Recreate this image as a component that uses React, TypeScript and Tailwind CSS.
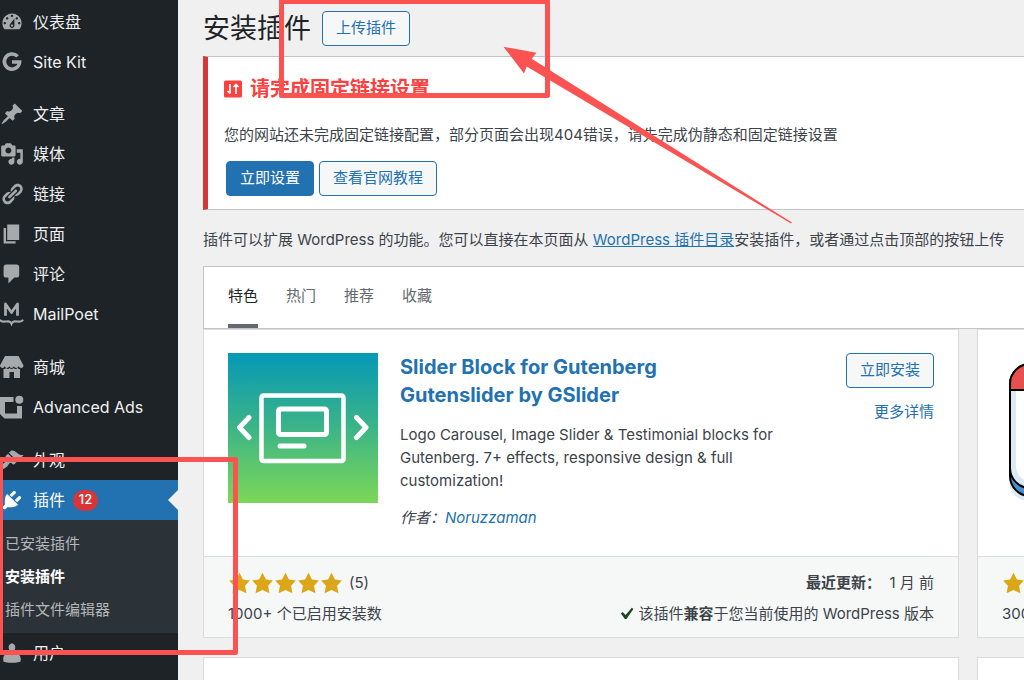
import type { ReactNode } from 'react';

const PATHS = {
  dashboard:
    'M3.76 16h12.48c1.1-1.37 1.76-3.11 1.76-5 0-4.42-3.58-8-8-8s-8 3.58-8 8c0 1.89.66 3.63 1.76 5zM10 4c.55 0 1 .45 1 1s-.45 1-1 1-1-.45-1-1 .45-1 1-1zM6 6c.55 0 1 .45 1 1s-.45 1-1 1-1-.45-1-1 .45-1 1-1zm8 0c.55 0 1 .45 1 1s-.45 1-1 1-1-.45-1-1 .45-1 1-1zm-5.37 5.55L12 7v6c0 1.1-.9 2-2 2s-2-.9-2-2c0-.57.24-1.08.63-1.45zM4 10c.55 0 1 .45 1 1s-.45 1-1 1-1-.45-1-1 .45-1 1-1zm12 0c.55 0 1 .45 1 1s-.45 1-1 1-1-.45-1-1 .45-1 1-1zm-5 3c0-.55-.45-1-1-1s-1 .45-1 1 .45 1 1 1 1-.45 1-1z',
  post: 'M10.44 3.02l1.82-1.82 6.36 6.35-1.83 1.82c-1.05-.68-2.48-.57-3.41.36l-.75.75c-.92.93-1.04 2.35-.35 3.41l-1.83 1.82-2.41-2.41-2.8 2.79c-.42.42-3.38 2.71-3.8 2.29s1.86-3.39 2.28-3.81l2.79-2.79L4.1 9.36l1.83-1.82c1.05.69 2.48.57 3.4-.36l.75-.75c.93-.92 1.05-2.35.36-3.41z',
  media:
    'M13 11V4c0-.55-.45-1-1-1h-1.67L9 1H5L3.67 3H2c-.55 0-1 .45-1 1v7c0 .55.45 1 1 1h10c.55 0 1-.45 1-1zM7 4.5c1.38 0 2.5 1.12 2.5 2.5S8.38 9.5 7 9.5 4.5 8.38 4.5 7 5.62 4.5 7 4.5zM14 6h5v10.5c0 1.38-1.12 2.5-2.5 2.5S14 17.88 14 16.5s1.12-2.5 2.5-2.5c.17 0 .34.02.5.05V9h-3V6zm-4 8.05V13h2v3.5c0 1.38-1.12 2.5-2.5 2.5S7 17.88 7 16.5 8.12 14 9.5 14c.17 0 .34.02.5.05z',
  links:
    'M17.74 2.76c1.68 1.69 1.68 4.41 0 6.1l-1.53 1.52c-1.12 1.12-2.7 1.47-4.14 1.09l2.62-2.61.76-.77.76-.76c.84-.84.84-2.2 0-3.04-.84-.85-2.2-.85-3.04 0l-.77.76-3.38 3.38c-.37-1.44-.02-3.02 1.1-4.14l1.52-1.53c1.69-1.68 4.42-1.68 6.1 0zM8.59 13.43l5.34-5.34c.42-.42.42-1.1 0-1.52-.44-.43-1.13-.39-1.53 0l-5.33 5.34c-.42.42-.42 1.1 0 1.52.44.43 1.13.39 1.52 0zm-.76 2.29l4.14-4.15c.38 1.44.03 3.02-1.09 4.14l-1.52 1.53c-1.69 1.68-4.41 1.68-6.1 0-1.68-1.68-1.68-4.42 0-6.1l1.53-1.52c1.12-1.12 2.7-1.47 4.14-1.1l-4.14 4.15c-.85.84-.85 2.2 0 3.05.84.84 2.2.84 3.04 0z',
  page: 'M6 15V2h10v13H6zm-1 1h8v2H3V5h2v11z',
  comments: 'M5 2h9c1.1 0 2 .9 2 2v7c0 1.1-.9 2-2 2h-2l-5 5v-5H5c-1.1 0-2-.9-2-2V4c0-1.1.9-2 2-2z',
  plugins:
    'M13.11 4.36L9.87 7.6 8 5.73l3.24-3.24c.35-.34 1.05-.2 1.56.32.52.51.66 1.21.31 1.55zm-8 1.77l.91-1.12 9.01 9.01-1.19.84c-.71.71-2.63 1.16-3.82 1.16H6.14L4.9 17.26c-.59.59-1.54.59-2.12 0-.59-.58-.59-1.53 0-2.12l1.24-1.24v-3.88c0-1.13.4-3.19 1.09-3.89zm7.26 3.97l3.24-3.24c.34-.35 1.04-.21 1.55.31.52.51.66 1.21.31 1.55l-3.24 3.25z',
  appearance:
    'M14.48 11.06L7.41 3.99l1.5-1.5c.5-.56 2.3-.47 3.51.32 1.21.8 1.43 1.28 2.91 2.1 1.18.64 2.45 1.26 4.45.85zm-.71.71L6.7 4.7 4.93 6.47c-.39.39-.39 1.02 0 1.41l1.06 1.06c.39.39.39 1.03 0 1.42-.6.6-1.43 1.11-2.21 1.69-.35.26-.7.53-1.01.84C1.43 14.23.4 16.08 1.4 17.07c.99 1 2.84-.03 4.18-1.36.31-.31.58-.66.85-1.02.57-.78 1.08-1.61 1.69-2.21.39-.39 1.02-.39 1.41 0l1.06 1.06c.39.39 1.02.39 1.41 0z',
  users:
    'M10 9.25c-2.27 0-2.73-3.44-2.73-3.44C7 4.02 7.82 2 9.97 2c2.16 0 2.98 2.02 2.71 3.81 0 0-.41 3.44-2.68 3.44zm0 2.57L12.72 10c2.39 0 4.52 2.33 4.52 4.53v2.49s-3.65 1.13-7.24 1.13c-3.65 0-7.24-1.13-7.24-1.13v-2.49c0-2.25 1.94-4.48 4.47-4.48z',
  star: 'M10 1l3 6 6 .75-4.12 4.62L16 19l-6-3-6 3 1.13-6.63L1 7.75 7 7z',
  yes: 'M14.83 4.89l1.34.94-5.81 8.38H9.02L5.78 9.67l1.34-1.25 2.57 2.4z',
};

function Glyph({ name, className = 'size-6' }: { name: keyof typeof PATHS; className?: string }) {
  return (
    <svg viewBox="0 0 20 20" className={`shrink-0 ${className}`} fill="currentColor" fillRule="evenodd" aria-hidden="true">
      <path d={PATHS[name]} />
    </svg>
  );
}

function SiteKitIcon() {
  return (
    <svg viewBox="0 0 24 24" className="size-6 shrink-0" fill="none" stroke="currentColor" strokeWidth="3.6" aria-hidden="true">
      <path d="M17.6 6.4A7.6 7.6 0 1 0 19.6 12H12" />
    </svg>
  );
}

function MailPoetIcon() {
  return (
    <svg viewBox="0 0 24 24" className="size-6 shrink-0" fill="none" stroke="currentColor" aria-hidden="true">
      <path d="M5.500 13.700V2L11.500 10.500L17.500 2V13.700" strokeWidth="2.800" strokeLinejoin="round" />
      <path d="M0.500 18.500c2.500 2.200 5.500.6 8 .8 1.600.2 2.400.9 3 2.400.6-1.500 1.400-2.200 3-2.400 2.500-.2 5.500 1.400 8-.8" strokeWidth="2.200" strokeLinecap="round" />
    </svg>
  );
}

function StoreIcon() {
  return (
    <svg viewBox="0 0 24 24" className="size-6 shrink-0" fill="currentColor" aria-hidden="true">
      <path d="M5 1h13.500l5 9.500c0 1.600-1 2.500-2.300 2.500s-2.300-1-2.500-2c-.3 1.200-1.300 2-2.400 2s-2.200-.8-2.400-2c-.3 1.200-1.200 2-2.300 2s-2.100-.8-2.400-2c-.2 1.200-1.200 2-2.300 2s-2-.8-2.300-2c-.2 1.200-1.200 2-2.300 2S0 12 0 10.500z" />
      <path d="M3.500 14c1 .2 1.800-.2 2.500-.9 1.300 1.200 2.800 1.200 3.800 0 1.100 1.200 2.800 1.200 3.800 0 1.200 1.200 2.600 1.200 3.800 0 .8.700 1.600 1 2.600.9v9h-6v-6H9.500v6h-6z" />
    </svg>
  );
}

function AdvancedAdsIcon() {
  return (
    <svg viewBox="0 0 24 24" className="size-6 shrink-0" fill="currentColor" aria-hidden="true">
      <path d="M0 2h13.500v5H5v11.500h12V11h5v12.500H4.500L0 19z" />
      <circle cx="19.300" cy="4.700" r="4" />
    </svg>
  );
}

function MenuItem({ icon, label, active = false, badge }: { icon: ReactNode; label: string; active?: boolean; badge?: string }) {
  return (
    <li>
      <a
        href="#"
        className={`relative flex h-10 items-center text-base ${active ? 'bg-[#2271b1] text-white' : 'text-[#f0f0f1]'}`}
      >
        <span className={`mr-[9px] ${active ? 'text-white' : 'text-[#a7aaad]'}`}>{icon}</span>
        <span>{label}</span>
        {badge && (
          <span className="ml-2 flex h-[21px] min-w-[25px] items-center justify-center rounded-full bg-[#d63638] text-[13px] font-medium">
            {badge}
          </span>
        )}
        {active && (
          <span className="absolute top-[10px] right-0 border-y-[10px] border-r-[10px] border-y-transparent border-r-[#f0f0f1]" />
        )}
      </a>
    </li>
  );
}

function Sidebar() {
  return (
    <nav aria-label="主菜单" className="w-[178px] shrink-0 bg-[#1d2327] pt-[2px]">
      <ul>
        <MenuItem icon={<Glyph name="dashboard" />} label="仪表盘" />
        <MenuItem icon={<SiteKitIcon />} label="Site Kit" />
      </ul>
      <ul className="mt-3">
        <MenuItem icon={<Glyph name="post" />} label="文章" />
        <MenuItem icon={<Glyph name="media" />} label="媒体" />
        <MenuItem icon={<Glyph name="links" />} label="链接" />
        <MenuItem icon={<Glyph name="page" />} label="页面" />
        <MenuItem icon={<Glyph name="comments" />} label="评论" />
        <MenuItem icon={<MailPoetIcon />} label="MailPoet" />
      </ul>
      <ul className="mt-[13px]">
        <MenuItem icon={<StoreIcon />} label="商城" />
        <MenuItem icon={<AdvancedAdsIcon />} label="Advanced Ads" />
      </ul>
      <ul className="mt-[13px]">
        <MenuItem icon={<Glyph name="appearance" />} label="外观" />
        <MenuItem icon={<Glyph name="plugins" />} label="插件" active badge="12" />
        <li>
          <ul className="bg-[#2c3338] py-[7px] text-[15px] leading-[33px] text-[#b5b8ba]">
            <li>
              <a href="#" className="block pl-[5px]">已安装插件</a>
            </li>
            <li>
              <a href="#" className="block pl-[5px] font-bold text-white">安装插件</a>
            </li>
            <li>
              <a href="#" className="block pl-[5px]">插件文件编辑器</a>
            </li>
          </ul>
        </li>
        <MenuItem icon={<Glyph name="users" />} label="用户" />
      </ul>
    </nav>
  );
}

function Button({ children, primary = false }: { children: ReactNode; primary?: boolean }) {
  return (
    <button
      type="button"
      className={`h-[35px] shrink-0 rounded-[4px] border border-[#2271b1] px-[13px] text-[15px] ${
        primary ? 'bg-[#2271b1] text-white' : 'bg-[#f6f7f7] text-[#2271b1]'
      }`}
    >
      {children}
    </button>
  );
}

function Notice() {
  return (
    <section className="border border-r-0 border-l-[5px] border-[#c3c4c7] border-l-[#d63638] bg-white pt-[18px] pb-[13px] pl-4">
      <h2 className="flex items-center gap-2 text-xl leading-7 font-bold text-[#fb4040]">
        <svg viewBox="0 0 18 18" className="size-[18px]" aria-hidden="true">
          <rect width="18" height="17" y="0.500" rx="1.500" fill="#fb4040" />
          <path d="M6 4v9.500M3.500 11L6 13.500M12 14V4.500M9.500 7L12 4.500 14.500 7" fill="none" stroke="#fff" strokeWidth="1.700" />
        </svg>
        请完成固定链接设置
      </h2>
      <p className="mt-5 text-[15px] leading-6 whitespace-nowrap">
        您的网站还未完成固定链接配置，部分页面会出现404错误，请先完成伪静态和固定链接设置
      </p>
      <div className="mt-[14px] flex gap-[5px] pl-[2px]">
        <Button primary>立即设置</Button>
        <Button>查看官网教程</Button>
      </div>
    </section>
  );
}

function Tabs() {
  const tabs = ['特色', '热门', '推荐', '收藏'];
  return (
    <nav aria-label="筛选插件" className="mt-[14px] flex h-[63px] gap-7 border border-r-0 border-[#c3c4c7] bg-white pl-6 text-[15px]">
      {tabs.map((tab, i) => (
        <a
          key={tab}
          href="#"
          className={`flex items-center border-b-4 pt-[2px] ${i === 0 ? 'border-[#646970] text-[#1d2327]' : 'border-transparent text-[#646970]'}`}
        >
          {tab}
        </a>
      ))}
    </nav>
  );
}

function GutensliderLogo() {
  return (
    <svg viewBox="0 0 150 150" className="size-[150px] shrink-0" fill="none" stroke="#fff" strokeLinecap="round" strokeLinejoin="round" role="img" aria-label="Gutenslider">
      <defs>
        <linearGradient id="gs" x1="0" y1="0" x2="0" y2="1">
          <stop offset="0" stopColor="#0599b6" />
          <stop offset="0.500" stopColor="#3cb487" />
          <stop offset="1" stopColor="#7dd857" />
        </linearGradient>
      </defs>
      <rect width="150" height="150" fill="url(#gs)" stroke="none" />
      <rect x="33.500" y="42.500" width="82" height="65.500" rx="2" strokeWidth="4.500" />
      <rect x="50.500" y="56" width="48" height="25.500" rx="2" strokeWidth="5" />
      <path d="M52 93H76" strokeWidth="5" />
      <path d="M21 64.500L11.500 74.500L21 84.500M128.500 64.500L138 74.500L128.500 84.500" strokeWidth="5" />
    </svg>
  );
}

function CalendarLogo() {
  return (
    <svg viewBox="0 0 150 150" className="size-[150px] shrink-0" role="img" aria-label="日历">
      <rect x="7" y="16" width="136" height="132" rx="20" fill="#dcebf5" />
      <rect x="8" y="11" width="134" height="132" rx="20" fill="#4a90cf" stroke="#000" strokeWidth="2" />
      <path d="M8 37H142V115a20 20 0 0 1-20 20H28a20 20 0 0 1-20-20z" fill="#dbe9f3" stroke="#000" strokeWidth="2" />
      <path d="M14 38H136V113a16 16 0 0 1-16 16H30a16 16 0 0 1-16-16z" fill="#fff" />
      <path d="M8 37V31a20 20 0 0 1 20-20H122a20 20 0 0 1 20 20V37z" fill="#e85050" stroke="#000" strokeWidth="2" />
    </svg>
  );
}

function Stars() {
  return (
    <span className="flex text-[#dba617]" role="img" aria-label="5 星">
      {[0, 1, 2, 3, 4].map((n) => (
        <Glyph key={n} name="star" className="h-6 w-[23px]" />
      ))}
    </span>
  );
}

type Plugin = {
  logo: ReactNode;
  name?: ReactNode;
  description?: string;
  author?: string;
  ratings?: string;
  installs: string;
};

function PluginCard({ plugin }: { plugin: Plugin }) {
  return (
    <article className="w-[756px] shrink-0 border border-[#dcdcde] bg-white">
      <div className="flex h-[226px] pt-[23px] pr-6 pl-6">
        {plugin.logo}
        {plugin.name && (
          <>
            <div className="ml-[22px] w-[390px]">
              <h3 className="text-xl leading-7 font-bold text-[#2271b1]">
                <a href="#">{plugin.name}</a>
              </h3>
              <p className="mt-[14px] text-[15px] leading-[23px]">{plugin.description}</p>
              <p className="mt-[14px] text-[15px] leading-[23px] italic">
                作者：
                <a href="#" className="text-[#2271b1]">{plugin.author}</a>
              </p>
            </div>
            <div className="ml-auto flex flex-col items-end gap-3 text-[15px]">
              <Button>立即安装</Button>
              <a href="#" className="leading-[23px] text-[#2271b1]">更多详情</a>
            </div>
          </>
        )}
      </div>
      <div className="flex h-[81px] justify-between border-t border-[#dcdcde] bg-[#f6f7f7] px-6 pt-[10px] text-[15px] leading-[31px]">
        <div>
          <div className="flex h-[31px] items-center">
            <Stars />
            <span className="ml-[6px]">{plugin.ratings}</span>
          </div>
          <div>{plugin.installs}</div>
        </div>
        {plugin.name && (
          <div className="text-right">
            <div>
              <strong>最近更新：</strong>&nbsp; 1 月 前
            </div>
            <div className="flex items-center">
              <Glyph name="yes" className="size-6 text-[#1e4620]" />
              <span>
                该插件<strong>兼容</strong>于您当前使用的 WordPress 版本
              </span>
            </div>
          </div>
        )}
      </div>
    </article>
  );
}

const gutenslider: Plugin = {
  logo: <GutensliderLogo />,
  name: (
    <>
      Slider Block for Gutenberg
      <br />
      Gutenslider by GSlider
    </>
  ),
  description: 'Logo Carousel, Image Slider & Testimonial blocks for Gutenberg. 7+ effects, responsive design & full customization!',
  author: 'Noruzzaman',
  ratings: '(5)',
  installs: '1000+ 个已启用安装数',
};

const calendar: Plugin = {
  logo: <CalendarLogo />,
  installs: '300',
};

function Annotations() {
  return (
    <div className="pointer-events-none absolute inset-0 overflow-hidden" aria-hidden="true">
      <div className="absolute -top-[1px] left-[279px] h-[99px] w-[271px] rounded-[2px] border-5 border-[#fb5252]" />
      <div className="absolute top-[457px] -left-[2px] h-[198px] w-[240px] rounded-[2px] border-5 border-[#fb5252]" />
      <svg className="absolute top-[46px] left-[503px]" width="290" height="178" viewBox="503 46 290 178">
        <path d="M503.500 46.700L536.500 52.800L531.700 58.800L792 222.600L791 223.600L526.700 66.500L524 73.500z" fill="#fb5252" />
      </svg>
    </div>
  );
}

export default function App() {
  return (
    <div className="relative flex h-screen overflow-hidden bg-[#f0f0f1] font-['Inter','Noto_Sans_CJK_SC',sans-serif] text-[15px] text-[#3c434a]">
      <Sidebar />
      <main className="min-w-0 flex-1 overflow-hidden pt-[11px] pl-[25px]">
        <header className="mb-[10px] flex items-center gap-[11px]">
          <h1 className="text-[27px] leading-[35px] text-[#1d2327]">安装插件</h1>
          <Button>上传插件</Button>
        </header>
        <Notice />
        <p className="mt-[18px] leading-6 whitespace-nowrap">
          插件可以扩展 WordPress 的功能。您可以直接在本页面从{' '}
          <a href="#" className="text-[#2271b1] underline">WordPress 插件目录</a>
          安装插件，或者通过点击顶部的按钮上传
        </p>
        <Tabs />
        <div className="flex gap-[18px]">
          <PluginCard plugin={gutenslider} />
          <PluginCard plugin={calendar} />
        </div>
        <div className="mt-[19px] flex gap-[18px]">
          <div className="h-[309px] w-[756px] shrink-0 border border-[#dcdcde] bg-white" />
          <div className="h-[309px] w-[756px] shrink-0 border border-[#dcdcde] bg-white" />
        </div>
      </main>
      <Annotations />
    </div>
  );
}
